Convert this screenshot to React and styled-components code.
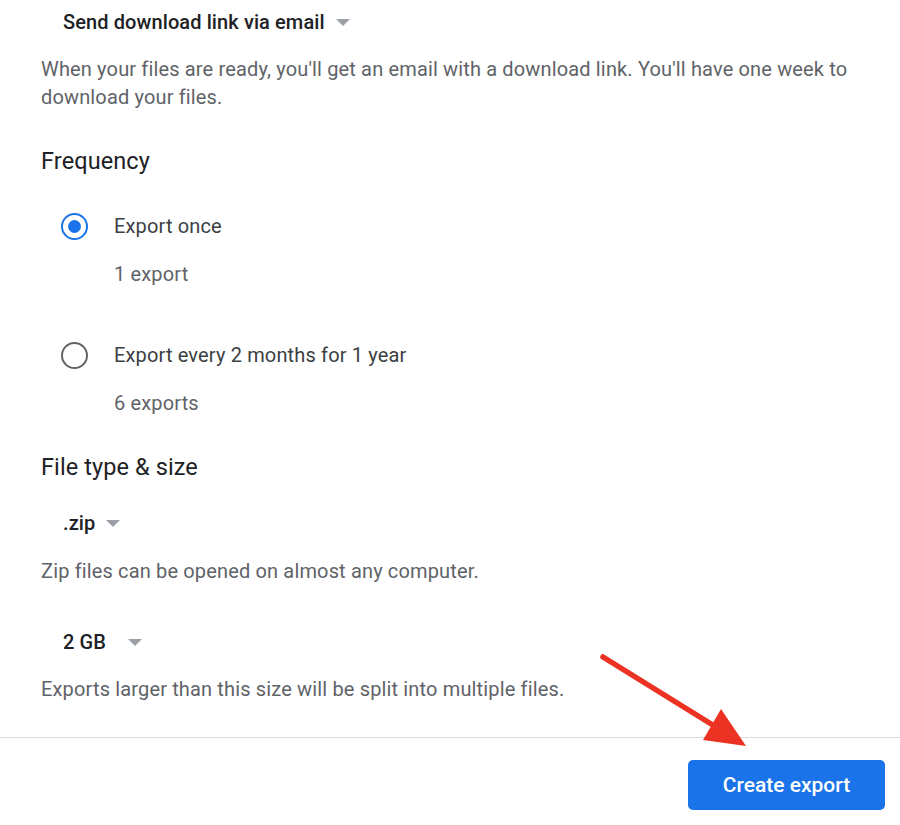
import React from "react";
import styled, { createGlobalStyle } from "styled-components";

const Global = createGlobalStyle`
  html, body { margin: 0; padding: 0; background: #fff; }
  body { font-family: Roboto, "Noto Sans", Arial, sans-serif; -webkit-font-smoothing: antialiased; }
`;

const Page = styled.div`
  position: relative;
  width: 900px;
  height: 825px;
  overflow: hidden;
  background: #fff;
`;

const Content = styled.div`
  padding: 8px 0 0 41px;
  display: flex;
  flex-direction: column;
`;

const Dropdown = styled.div`
  display: flex;
  align-items: center;
  gap: ${(p) => p.$gap || 11}px;
  margin-left: 22px;
  margin-top: ${(p) => p.$mt || 0}px;
  height: 28px;
  font-size: 20px;
  font-weight: 500;
  letter-spacing: 0.1px;
  color: #202124;
`;

const Caret = styled.span`
  width: 0;
  height: 0;
  border-left: 7.5px solid transparent;
  border-right: 7.5px solid transparent;
  border-top: 7px solid #9aa0a6;
  margin-top: 1px;
`;

const Desc = styled.p`
  margin: ${(p) => p.$mt || 0}px 0 0 0;
  font-size: 20px;
  line-height: 28px;
  letter-spacing: 0.15px;
  color: #5f6368;
  max-width: 820px;
`;

const SectionTitle = styled.h2`
  margin: ${(p) => p.$mt || 0}px 0 0 0;
  font-size: 23.5px;
  font-weight: 400;
  line-height: 32px;
  letter-spacing: 0.1px;
  color: #202124;
`;

const Option = styled.div`
  display: flex;
  flex-direction: column;
  margin-top: ${(p) => p.$mt || 0}px;
`;

const OptionRow = styled.label`
  display: flex;
  align-items: center;
  height: 40px;
  gap: 26px;
  padding-left: 20px;
`;

const Radio = styled.span`
  box-sizing: border-box;
  width: 27px;
  height: 27px;
  border-radius: 50%;
  border: 2.5px solid ${(p) => (p.$checked ? "#1a73e8" : "#5f6368")};
  display: flex;
  align-items: center;
  justify-content: center;
  &::after {
    content: "";
    width: 13px;
    height: 13px;
    border-radius: 50%;
    background: ${(p) => (p.$checked ? "#1a73e8" : "transparent")};
  }
`;

const OptionLabel = styled.span`
  font-size: 20px;
  letter-spacing: 0.15px;
  color: #3c4043;
`;

const OptionSub = styled.span`
  margin-top: 14px;
  margin-left: 73px;
  font-size: 20px;
  line-height: 28px;
  letter-spacing: 0.15px;
  color: #5f6368;
`;

const Footer = styled.div`
  margin-top: 34px;
  border-top: 1px solid #dadce0;
  display: flex;
  justify-content: flex-end;
  padding: 22px 15px 0 0;
`;

const PrimaryButton = styled.button`
  width: 197px;
  height: 50px;
  border: none;
  border-radius: 5px;
  background: #1a73e8;
  color: #fff;
  font-family: Roboto, "Noto Sans", Arial, sans-serif;
  font-size: 21px;
  font-weight: 500;
  cursor: pointer;
`;

const ArrowLayer = styled.svg`
  position: absolute;
  left: 0;
  top: 0;
  pointer-events: none;
`;

export default function App() {
  return (
    <Page>
      <Global />
      <Content>
        <Dropdown>
          Send download link via email <Caret />
        </Dropdown>
        <Desc $mt={19}>
          When your files are ready, you'll get an email with a download link. You'll have one week to
          download your files.
        </Desc>

        <SectionTitle $mt={34}>Frequency</SectionTitle>

        <Option $mt={29}>
          <OptionRow>
            <Radio $checked />
            <OptionLabel>Export once</OptionLabel>
          </OptionRow>
          <OptionSub>1 export</OptionSub>
        </Option>

        <Option $mt={47}>
          <OptionRow>
            <Radio />
            <OptionLabel>Export every 2 months for 1 year</OptionLabel>
          </OptionRow>
          <OptionSub>6 exports</OptionSub>
        </Option>

        <SectionTitle $mt={34}>File type &amp; size</SectionTitle>

        <Dropdown $mt={26}>
          .zip <Caret />
        </Dropdown>
        <Desc $mt={20}>Zip files can be opened on almost any computer.</Desc>

        <Dropdown $mt={43} $gap={22}>
          2 GB <Caret />
        </Dropdown>
        <Desc $mt={19}>Exports larger than this size will be split into multiple files.</Desc>
      </Content>
      <Footer>
        <PrimaryButton>Create export</PrimaryButton>
      </Footer>
      <ArrowLayer width="900" height="825" viewBox="0 0 900 825">
        <line x1="603" y1="657" x2="716" y2="727" stroke="#ec3223" strokeWidth="5.5" strokeLinecap="round" />
        <polygon points="746,746 703,740 721,709" fill="#ec3223" />
      </ArrowLayer>
    </Page>
  );
}
